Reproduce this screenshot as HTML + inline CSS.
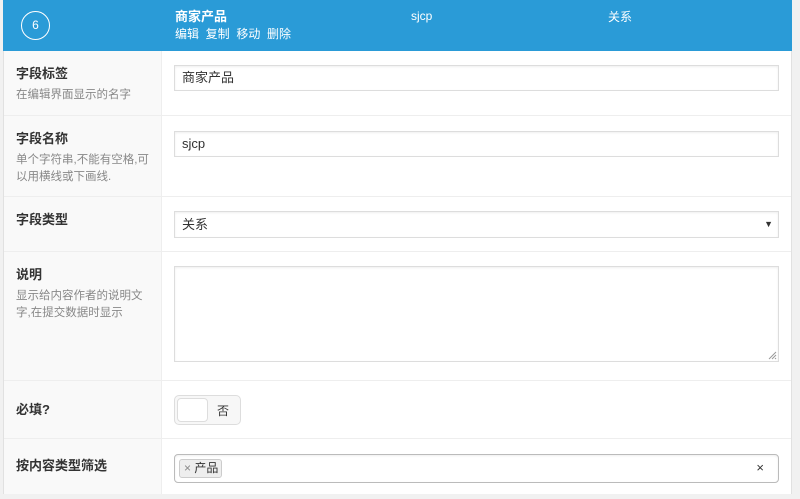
<!DOCTYPE html>
<html><head><meta charset="utf-8"><style>
*{box-sizing:border-box;margin:0;padding:0}
body{width:800px;height:499px;background:#f1f1f1;font-family:"Liberation Sans","Noto Sans CJK SC",sans-serif;font-size:13px;color:#444;position:relative;overflow:hidden}
.panel{position:absolute;left:3px;top:0;width:789px;height:494px;background:#fff;border-left:1px solid #e1e1e1;border-right:1px solid #e1e1e1}
.head{position:absolute;left:3px;top:0;width:789px;height:51px;background:#2a9bd7;color:#fff}
.circ{position:absolute;left:18px;top:11px;width:29px;height:29px;border:1px solid #fff;border-radius:50%;text-align:center;line-height:27px;font-size:12px}
.row{position:absolute;left:4px;width:787px;border-bottom:1px solid #eee}
.lab{position:absolute;left:0;top:0;bottom:0;width:158px;background:#f9f9f9;border-right:1px solid #eee;padding:12px 12px}
.lab b{display:block;font-size:13px;color:#333;font-weight:bold}
.lab small{display:block;font-size:11.5px;color:#888;margin-top:5px;line-height:17px}
.inp{position:absolute;left:170px;width:605px;border:1px solid #ddd;box-shadow:inset 0 1px 2px rgba(0,0,0,.07);background:#fff;padding:0 7px;font-size:13px;color:#333}
</style></head><body>
<div class="panel"></div>
<div class="head">
<div class="circ">6</div>
<div style="position:absolute;left:172px;top:6px;font-weight:bold;font-size:13px">商家产品</div>
<div style="position:absolute;left:172px;top:25px;font-size:12px">编辑&nbsp; 复制&nbsp; 移动&nbsp; 删除</div>
<div style="position:absolute;left:408px;top:9px;font-size:12px">sjcp</div>
<div style="position:absolute;left:605px;top:8px;font-size:12px">关系</div>
</div>
<div class="row" style="top:51px;height:65px"><div class="lab"><b>字段标签</b><small>在编辑界面显示的名字</small></div>
<div class="inp" style="top:14px;height:26px;line-height:24px">商家产品</div></div>
<div class="row" style="top:116px;height:81px"><div class="lab"><b>字段名称</b><small>单个字符串,不能有空格,可以用横线或下画线.</small></div>
<div class="inp" style="top:15px;height:26px;line-height:24px">sjcp</div></div>
<div class="row" style="top:197px;height:55px"><div class="lab"><b>字段类型</b></div>
<div class="inp" style="top:14px;height:27px;line-height:25px">关系<span style="position:absolute;right:5px;font-size:9px;color:#333">▼</span></div></div>
<div class="row" style="top:252px;height:129px"><div class="lab"><b>说明</b><small>显示给内容作者的说明文字,在提交数据时显示</small></div>
<div class="inp" style="top:14px;height:96px"><svg style="position:absolute;right:1px;bottom:1px" width="9" height="9"><path d="M8 1L1 8M8 4L4 8M8 7L7 8" stroke="#999"/></svg></div></div>
<div class="row" style="top:381px;height:58px"><div class="lab" style="padding-top:18px"><b>必填?</b></div>
<div style="position:absolute;left:170px;top:14px;width:67px;height:30px;border:1px solid #ddd;border-radius:5px;background:#f7f7f7"><div style="position:absolute;left:2px;top:2px;width:31px;height:24px;border:1px solid #ddd;border-radius:4px;background:#fff"></div><span style="position:absolute;left:42px;top:6px;font-size:12px;color:#333">否</span></div></div>
<div class="row" style="top:439px;height:55px;border-bottom:none"><div class="lab" style="padding-top:16px"><b>按内容类型筛选</b></div>
<div class="inp" style="top:15px;height:29px;border-color:#bbb;border-radius:4px;padding:0 4px"><span style="display:inline-block;margin-top:4px;border:1px solid #ccc;border-radius:3px;background:#eee;font-size:12px;padding:0 3px 0 4px;line-height:17px;color:#333"><span style="color:#888">× </span>产品</span><span style="position:absolute;right:14px;top:5px;font-size:13px;color:#333">×</span></div></div>
</body></html>
